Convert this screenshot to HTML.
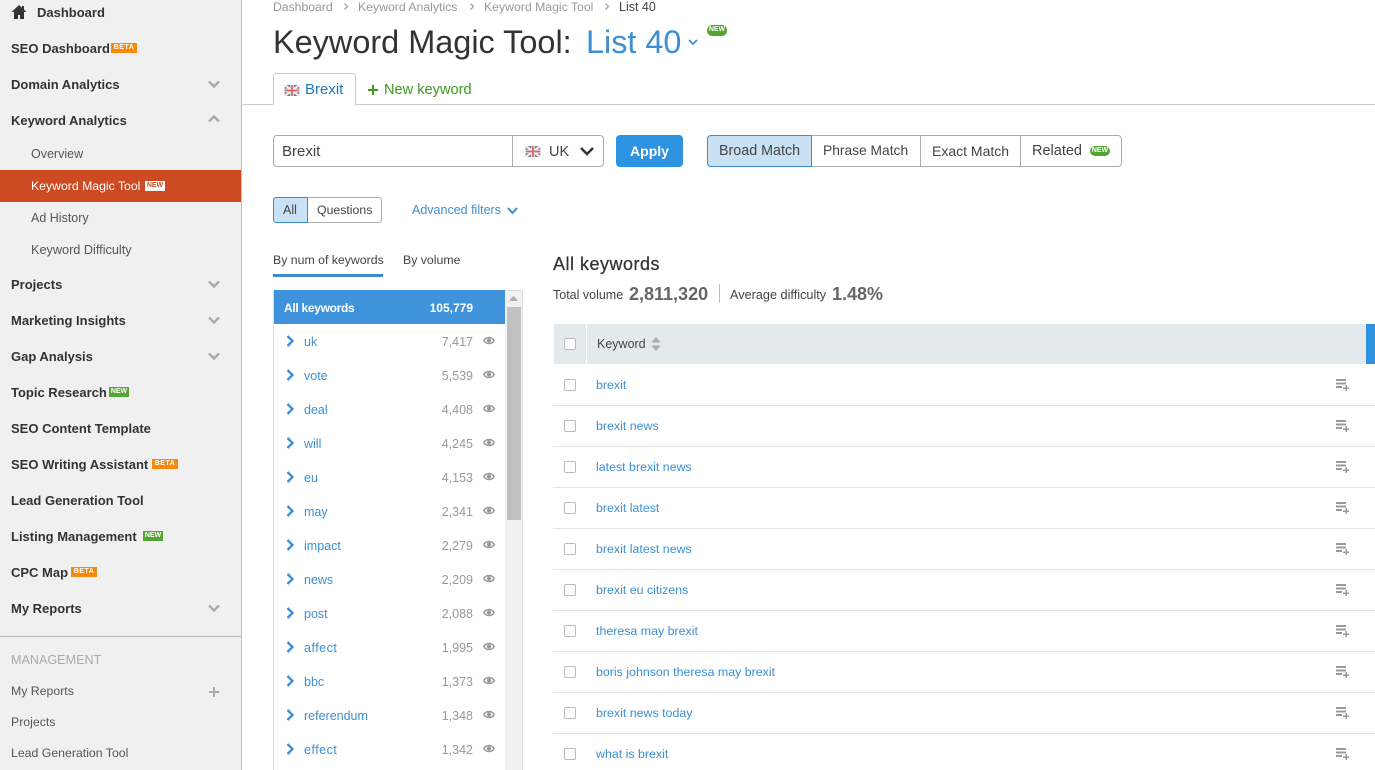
<!DOCTYPE html>
<html lang="en"><head><meta charset="utf-8"><title>Keyword Magic Tool</title>
<style>
html,body{margin:0;padding:0;width:1375px;height:770px;overflow:hidden;background:#fff}
body{position:relative;font-family:"Liberation Sans",sans-serif;color:#333}
.t,.b,svg.a{position:absolute}
.t{white-space:nowrap;line-height:16px}
.b{box-sizing:border-box}
.m{font-size:13px;font-weight:700;color:#333;left:11px}
.s{font-size:12.5px;color:#555;left:31px}
.c{font-size:12.3px;color:#555;left:11px}
.bd{position:absolute;font-size:7px;font-weight:700;text-align:center;line-height:10px;height:10px;color:#fff}
.beta{background:#f68a0a;width:26px;letter-spacing:.5px}
.nw{background:#55a630;width:20px}
.k{font-size:12.5px;color:#3c8fd4;left:304px}
.n{font-size:12.5px;color:#999;right:902px}
.r{font-size:12.4px;color:#3c8fd4;left:596px}
.l{position:absolute;left:553px;width:822px;height:1px;background:#e4e4e4}
.cb{position:absolute;left:564px;width:12px;height:12px;border:1px solid #bbb;border-radius:2px;box-sizing:border-box;background:#fff}
</style></head><body>
<div class="b" style="left:0;top:0;width:242px;height:770px;background:#f0f0f0;border-right:1px solid #bdbdbd"></div>
<div class="b" style="left:0;top:170px;width:241px;height:32px;background:#cc4b23"></div>
<div class="b" style="left:0;top:636px;width:241px;height:1px;background:#bdbdbd"></div>
<svg class="a" style="left:11px;top:4px" width="16" height="16" viewBox="0 0 16 16"><path d="M8 1 0.500 8H3v7h4v-4h2v4h4V8h2.500L13 5.600V2h-2v1.700z" fill="#333"/></svg>
<div class="t m" style="left:37px;top:5px">Dashboard</div>
<div class="t m" style="top:41px">SEO Dashboard</div><div class="bd beta" style="left:111px;top:43px">BETA</div>
<div class="t m" style="top:77px">Domain Analytics</div>
<div class="t m" style="top:113px">Keyword Analytics</div>
<div class="t s" style="top:146px">Overview</div>
<div class="t s" style="top:178px;color:#fff;font-size:12.25px">Keyword Magic Tool</div><div class="bd" style="left:145px;top:181px;width:20px;background:#fff;color:#cc4b23">NEW</div>
<div class="t s" style="top:210px">Ad History</div>
<div class="t s" style="top:242px;font-size:12.7px">Keyword Difficulty</div>
<div class="t m" style="top:277px">Projects</div>
<div class="t m" style="top:313px">Marketing Insights</div>
<div class="t m" style="top:349px">Gap Analysis</div>
<div class="t m" style="top:385px">Topic Research</div><div class="bd nw" style="left:109px;top:387px">NEW</div>
<div class="t m" style="top:421px">SEO Content Template</div>
<div class="t m" style="top:457px">SEO Writing Assistant</div><div class="bd beta" style="left:152px;top:459px">BETA</div>
<div class="t m" style="top:493px">Lead Generation Tool</div>
<div class="t m" style="top:529px">Listing Management</div><div class="bd nw" style="left:143px;top:531px">NEW</div>
<div class="t m" style="top:565px">CPC Map</div><div class="bd beta" style="left:71px;top:567px">BETA</div>
<div class="t m" style="top:601px">My Reports</div>
<div class="t c" style="top:652px;color:#aaa;font-size:12.6px">MANAGEMENT</div>
<div class="t c" style="top:683px">My Reports</div>
<div class="t c" style="top:714px">Projects</div>
<div class="t c" style="top:745px">Lead Generation Tool</div>
<svg class="a" style="left:208px;top:80px" width="12" height="540" viewBox="0 0 12 540" fill="none" stroke="#aaa" stroke-width="2.400">
<path d="M1 1.500 6 6.500 11 1.500"/><path d="M1 41.500 6 36.500 11 41.500"/><path d="M1 201.500 6 206.500 11 201.500"/><path d="M1 237.500 6 242.500 11 237.500"/><path d="M1 273.500 6 278.500 11 273.500"/><path d="M1 525.500 6 530.500 11 525.500"/></svg>
<svg class="a" style="left:208px;top:686px" width="12" height="12" viewBox="0 0 12 12"><path d="M5 1h2v4h4v2H7v4H5V7H1V5h4z" fill="#aaa"/></svg>

<div class="t" style="left:273px;top:-1px;font-size:12.2px;color:#999">Dashboard</div>
<div class="t" style="left:358px;top:-1px;font-size:12.25px;color:#999">Keyword Analytics</div>
<div class="t" style="left:484px;top:-1px;font-size:12.25px;color:#999">Keyword Magic Tool</div>
<div class="t" style="left:619px;top:-1px;font-size:12.5px;color:#444">List 40</div>
<svg class="a" style="left:344px;top:3px" width="266" height="8" viewBox="0 0 266 8" fill="none" stroke="#999" stroke-width="1.200"><path d="M0.500 0.500 3.500 3.500 0.500 6.500M126.500 0.500 129.500 3.500 126.500 6.500M261.500 0.500 264.500 3.500 261.500 6.500"/></svg>
<div class="t" style="left:273px;top:22px;font-size:32.45px;line-height:40px;color:#333">Keyword Magic Tool:</div>
<div class="t" style="left:586px;top:22px;font-size:32.4px;line-height:40px;color:#3c8fd4">List 40</div>
<svg class="a" style="left:688px;top:39px" width="10" height="7" viewBox="0 0 10 7" fill="none" stroke="#3c8fd4" stroke-width="1.800"><path d="M1 1 5 5 9 1"/></svg>
<div class="bd" style="left:707px;top:25px;width:20px;height:11px;background:#55a630;border-radius:5px">NEW</div>

<div class="b" style="left:243px;top:104px;width:1132px;height:1px;background:#ccc"></div>
<div class="b" style="left:273px;top:73px;width:83px;height:32px;background:#fff;border:1px solid #ccc;border-bottom:none;border-radius:3px 3px 0 0"></div>
<svg class="a" style="left:284px;top:85px" width="16" height="11" viewBox="0 0 16 12"><rect width="16" height="12" fill="#6a74a8"/><path d="M0 0 16 12M16 0 0 12" stroke="#eee" stroke-width="2.500"/><path d="M8 0v12M0 6h16" stroke="#eee" stroke-width="4"/><path d="M8 0v12M0 6h16" stroke="#d66" stroke-width="2"/></svg>
<div class="t" style="left:305px;top:82px;font-size:15px;color:#1f77b4">Brexit</div>
<svg class="a" style="left:368px;top:85px" width="10" height="10" viewBox="0 0 10 10"><path d="M4 0h2v4h4v2H6v4H4V6H0V4h4z" fill="#3c9a1e"/></svg>
<div class="t" style="left:384px;top:82px;font-size:14.6px;color:#3c9a1e">New keyword</div>

<div class="b" style="left:273px;top:135px;width:331px;height:32px;border:1px solid #aaa;border-radius:4px"></div>
<div class="b" style="left:512px;top:135px;width:1px;height:32px;background:#aaa"></div>
<div class="t" style="left:282px;top:144px;font-size:15px;color:#444">Brexit</div>
<svg class="a" style="left:525px;top:146px" width="16" height="11" viewBox="0 0 16 12"><rect width="16" height="12" fill="#6a74a8"/><path d="M0 0 16 12M16 0 0 12" stroke="#eee" stroke-width="2.500"/><path d="M8 0v12M0 6h16" stroke="#eee" stroke-width="4"/><path d="M8 0v12M0 6h16" stroke="#d66" stroke-width="2"/></svg>
<div class="t" style="left:549px;top:144px;font-size:14.5px;color:#444">UK</div>
<svg class="a" style="left:580px;top:147px" width="14" height="9" viewBox="0 0 14 9" fill="none" stroke="#333" stroke-width="2.500"><path d="M1 1 7 7 13 1"/></svg>
<div class="b" style="left:616px;top:135px;width:67px;height:32px;background:#2d92e0;border-radius:4px"></div>
<div class="t" style="left:616px;top:143px;width:67px;text-align:center;font-size:14px;font-weight:700;color:#fff">Apply</div>

<div class="b" style="left:707px;top:135px;width:415px;height:32px;border:1px solid #aaa;border-radius:4px"></div>
<div class="b" style="left:707px;top:135px;width:105px;height:32px;background:#c8e1f5;border:1px solid #3c8fd4;border-radius:4px 0 0 4px"></div>
<div class="b" style="left:920px;top:135px;width:1px;height:32px;background:#aaa"></div>
<div class="b" style="left:1020px;top:135px;width:1px;height:32px;background:#aaa"></div>
<div class="t" style="left:719px;top:143px;font-size:14.3px;color:#444">Broad Match</div>
<div class="t" style="left:823px;top:143px;font-size:13.8px;color:#444">Phrase Match</div>
<div class="t" style="left:932px;top:143px;font-size:14px;color:#444">Exact Match</div>
<div class="t" style="left:1032px;top:143px;font-size:14.5px;color:#444">Related</div>
<div class="bd" style="left:1090px;top:146px;width:20px;height:10px;background:#55a630;border-radius:5px">NEW</div>

<div class="b" style="left:273px;top:197px;width:109px;height:26px;border:1px solid #aaa;border-radius:3px"></div>
<div class="b" style="left:273px;top:197px;width:35px;height:26px;background:#c8e1f5;border:1px solid #3c8fd4;border-radius:3px 0 0 3px"></div>
<div class="t" style="left:283px;top:202px;font-size:12.5px;color:#444">All</div>
<div class="t" style="left:317px;top:202px;font-size:12.3px;color:#444">Questions</div>
<div class="t" style="left:412px;top:202px;font-size:12.5px;color:#3c8fd4">Advanced filters</div>
<svg class="a" style="left:507px;top:207px" width="11" height="8" viewBox="0 0 11 8" fill="none" stroke="#3c8fd4" stroke-width="2"><path d="M1 1 5.500 6 10 1"/></svg>

<div class="t" style="left:273px;top:252px;font-size:12.3px;color:#444">By num of keywords</div>
<div class="t" style="left:403px;top:252px;font-size:12.3px;color:#444">By volume</div>
<div class="b" style="left:273px;top:274px;width:110px;height:3px;background:#3c8fd4"></div>

<div class="b" style="left:273px;top:290px;width:250px;height:480px;border:1px solid #ddd;border-bottom:none"></div>
<div class="b" style="left:505px;top:291px;width:17px;height:479px;background:#f1f1f1"></div>
<div class="b" style="left:507px;top:307px;width:14px;height:213px;background:#c1c1c1"></div>
<svg class="a" style="left:509px;top:296px" width="9" height="6" viewBox="0 0 9 6"><path d="M4.500 0 9 5H0z" fill="#aaa"/></svg>
<div class="b" style="left:274px;top:290px;width:231px;height:34px;background:#3f93dc"></div>
<div class="t" style="left:284px;top:300px;font-size:12px;letter-spacing:-.3px;font-weight:700;color:#fff">All keywords</div>
<div class="t" style="right:902px;top:300px;font-size:12px;font-weight:700;color:#fff">105,779</div>

<div class="t k" style="top:334px">uk</div><div class="t n" style="top:334px">7,417</div>
<div class="t k" style="top:368px">vote</div><div class="t n" style="top:368px">5,539</div>
<div class="t k" style="top:402px">deal</div><div class="t n" style="top:402px">4,408</div>
<div class="t k" style="top:436px">will</div><div class="t n" style="top:436px">4,245</div>
<div class="t k" style="top:470px">eu</div><div class="t n" style="top:470px">4,153</div>
<div class="t k" style="top:504px">may</div><div class="t n" style="top:504px">2,341</div>
<div class="t k" style="top:538px">impact</div><div class="t n" style="top:538px">2,279</div>
<div class="t k" style="top:572px">news</div><div class="t n" style="top:572px">2,209</div>
<div class="t k" style="top:606px">post</div><div class="t n" style="top:606px">2,088</div>
<div class="t k" style="top:640px;letter-spacing:.5px">affect</div><div class="t n" style="top:640px">1,995</div>
<div class="t k" style="top:674px">bbc</div><div class="t n" style="top:674px">1,373</div>
<div class="t k" style="top:708px">referendum</div><div class="t n" style="top:708px">1,348</div>
<div class="t k" style="top:742px;letter-spacing:.5px">effect</div><div class="t n" style="top:742px">1,342</div>
<svg class="a" style="left:286px;top:335px" width="10" height="424" viewBox="0 0 10 424" fill="none" stroke="#3c8fd4" stroke-width="2.300"><path d="M1.500 1 6.500 6 1.500 11M1.500 35 6.500 40 1.500 45M1.500 69 6.500 74 1.500 79M1.500 103 6.500 108 1.500 113M1.500 137 6.500 142 1.500 147M1.500 171 6.500 176 1.500 181M1.500 205 6.500 210 1.500 215M1.500 239 6.500 244 1.500 249M1.500 273 6.500 278 1.500 283M1.500 307 6.500 312 1.500 317M1.500 341 6.500 346 1.500 351M1.500 375 6.500 380 1.500 385M1.500 409 6.500 414 1.500 419"/></svg>
<svg class="a" style="left:483px;top:335px" width="12" height="424" viewBox="0 0 12 424">
<defs><g id="e"><path d="M0.800 5.500C3 1.500 9 1.500 11.200 5.500 9 9.500 3 9.500 0.800 5.500z" fill="none" stroke="#999" stroke-width="1.500"/><circle cx="6" cy="5.500" r="2.200" fill="#999"/></g></defs>
<use href="#e"/><use href="#e" y="34"/><use href="#e" y="68"/><use href="#e" y="102"/><use href="#e" y="136"/><use href="#e" y="170"/><use href="#e" y="204"/><use href="#e" y="238"/><use href="#e" y="272"/><use href="#e" y="306"/><use href="#e" y="340"/><use href="#e" y="374"/><use href="#e" y="408"/></svg>

<div class="t" style="left:553px;top:254px;font-size:18px;letter-spacing:.5px;-webkit-text-stroke:.25px #333;line-height:20px;color:#333">All keywords</div>
<div class="t" style="left:553px;top:287px;font-size:12.5px;color:#444">Total volume</div>
<div class="t" style="left:629px;top:285px;font-size:18px;line-height:18px;font-weight:700;color:#666">2,811,320</div>
<div class="b" style="left:719px;top:284px;width:1px;height:19px;background:#bbb"></div>
<div class="t" style="left:730px;top:287px;font-size:12.7px;color:#444">Average difficulty</div>
<div class="t" style="left:832px;top:285px;font-size:18px;line-height:18px;font-weight:700;color:#666">1.48%</div>

<div class="b" style="left:554px;top:324px;width:812px;height:40px;background:#e3eaed"></div>
<div class="b" style="left:586px;top:324px;width:1px;height:40px;background:#fff"></div>
<div class="b" style="left:1366px;top:324px;width:9px;height:40px;background:#2d92e0"></div>
<div class="cb" style="top:338px"></div>
<div class="t" style="left:597px;top:336px;font-size:12.5px;color:#444">Keyword</div>
<svg class="a" style="left:651px;top:337px" width="10" height="14" viewBox="0 0 10 14"><path d="M5 0 9.500 5.500H.5zM5 14 .5 8.500h9z" fill="#aaa"/></svg>

<div class="cb" style="top:379px"></div><div class="t r" style="top:377px">brexit</div><div class="l" style="top:405px"></div>
<div class="cb" style="top:420px"></div><div class="t r" style="top:418px">brexit news</div><div class="l" style="top:446px"></div>
<div class="cb" style="top:461px"></div><div class="t r" style="top:459px">latest brexit news</div><div class="l" style="top:487px"></div>
<div class="cb" style="top:502px"></div><div class="t r" style="top:500px">brexit latest</div><div class="l" style="top:528px"></div>
<div class="cb" style="top:543px"></div><div class="t r" style="top:541px">brexit latest news</div><div class="l" style="top:569px"></div>
<div class="cb" style="top:584px"></div><div class="t r" style="top:582px">brexit eu citizens</div><div class="l" style="top:610px"></div>
<div class="cb" style="top:625px"></div><div class="t r" style="top:623px">theresa may brexit</div><div class="l" style="top:651px"></div>
<div class="cb" style="top:666px"></div><div class="t r" style="top:664px">boris johnson theresa may brexit</div><div class="l" style="top:692px"></div>
<div class="cb" style="top:707px"></div><div class="t r" style="top:705px">brexit news today</div><div class="l" style="top:733px"></div>
<div class="cb" style="top:748px"></div><div class="t r" style="top:746px">what is brexit</div>
<svg class="a" style="left:1336px;top:379px" width="13" height="385" viewBox="0 0 13 385">
<defs><path id="p" d="M0 0h10v2H0zM0 3.500h10v2H0zM0 7h6v2H0zM9.500 6H11v2.500h2V10h-2v2H9.500V10H7V8.500h2.500z" fill="#999"/></defs>
<use href="#p"/><use href="#p" y="41"/><use href="#p" y="82"/><use href="#p" y="123"/><use href="#p" y="164"/><use href="#p" y="205"/><use href="#p" y="246"/><use href="#p" y="287"/><use href="#p" y="328"/><use href="#p" y="369"/></svg>
</body></html>
